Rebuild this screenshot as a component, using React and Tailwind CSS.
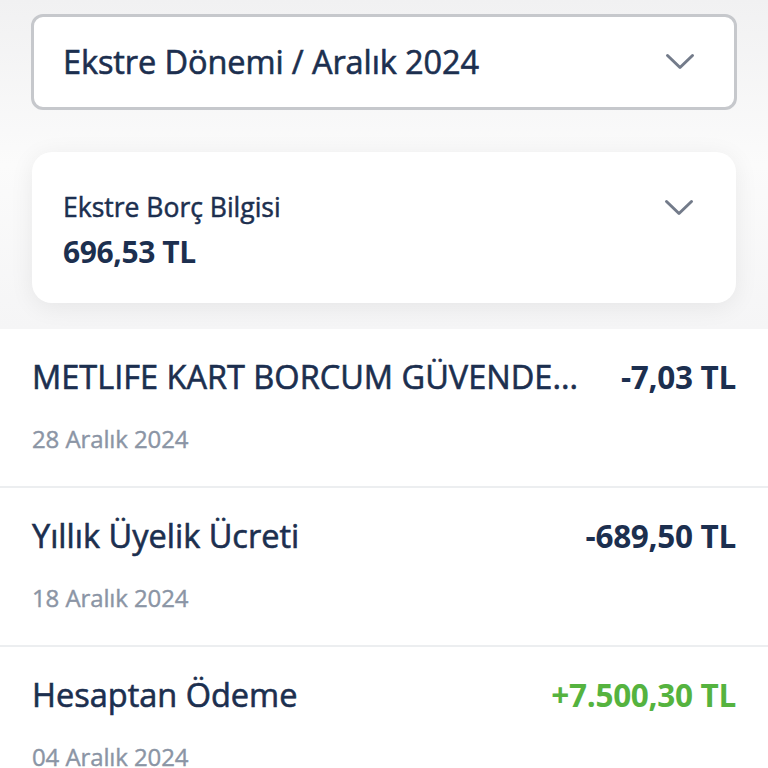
import React from 'react';

const font = { fontFamily: '"Open Sans", "Noto Sans", sans-serif' };

function Chevron({ className }) {
  return (
    <svg viewBox="0 0 30 18" className={className} fill="none">
      <path d="M2.5 2.5 L15 14.5 L27.5 2.5" stroke="#737b8a" strokeWidth="3" strokeLinecap="round" strokeLinejoin="round" />
    </svg>
  );
}

const rows = [
  { title: 'METLIFE KART BORCUM GÜVENDE...', amount: '-7,03 TL', date: '28 Aralık 2024', green: false },
  { title: 'Yıllık Üyelik Ücreti', amount: '-689,50 TL', date: '18 Aralık 2024', green: false },
  { title: 'Hesaptan Ödeme', amount: '+7.500,30 TL', date: '04 Aralık 2024', green: true },
];

export default function App() {
  return (
    <div className="w-[768px] h-[768px] overflow-hidden bg-white" style={font}>
      <div className="bg-gradient-to-b from-[#f1f1f2] via-[#fbfbfb] to-[#f5f5f6] px-[31px] pt-[14px] pb-[26px]">
        <div className="h-[96px] rounded-[12px] border-[3px] border-[#c6c8cc] bg-white flex items-center justify-between pl-[29px] pr-[39px]">
          <span className="text-[32.5px] text-[#1c2f4f] tracking-[-0.1px] [-webkit-text-stroke:0.6px_#1c2f4f]">Ekstre Dönemi / Aralık 2024</span>
          <Chevron className="w-[30px] h-[18px]" />
        </div>
        <div className="mt-[42px] mx-px h-[151px] rounded-[20px] bg-white shadow-[0_4px_24px_rgba(0,0,0,0.07)] flex justify-between pl-[31px] pr-[42px] pt-[37px]">
          <div className="flex flex-col">
            <span className="text-[26.5px] leading-[36px] text-[#1c2f4f] tracking-[0px] [-webkit-text-stroke:0.5px_#1c2f4f]">Ekstre Borç Bilgisi</span>
            <span className="text-[30px] leading-[40px] font-bold text-[#1c2f4f] mt-[7px] tracking-[-0.4px]">696,53 TL</span>
          </div>
          <Chevron className="w-[30px] h-[18px] mt-[10px]" />
        </div>
      </div>
      <div className="bg-white">
        {rows.map((r, i) => (
          <div key={i} className={`h-[159px] px-[32px] pt-[27px] ${i < rows.length - 1 ? 'border-b-2 border-[#eceef0]' : ''}`}>
            <div className="flex justify-between items-center h-[42px]">
              <span className="text-[32.5px] text-[#1c2f4f] tracking-[0px] [-webkit-text-stroke:0.6px_#1c2f4f] whitespace-nowrap">{r.title}</span>
              <span className={`text-[31.5px] font-bold tracking-[-0.3px] ${r.green ? 'text-[#55b33f]' : 'text-[#1c2f4f]'}`}>{r.amount}</span>
            </div>
            <div className="mt-[24px] text-[24px] leading-[34px] text-[#8b95a5] tracking-[-0.1px] [-webkit-text-stroke:0.4px_#8b95a5]">{r.date}</div>
          </div>
        ))}
      </div>
    </div>
  );
}
